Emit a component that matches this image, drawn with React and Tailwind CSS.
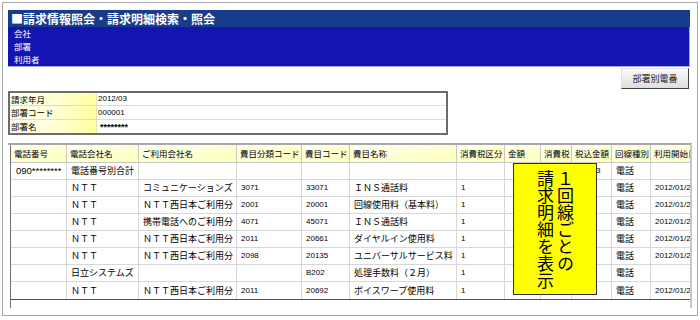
import React from "react";

const W = [56, 72, 98, 65, 48, 107, 48, 36, 31, 40, 39, 60];
const HEAD = ["電話番号", "電話会社名", "ご利用会社名", "費目分類コード", "費目コード", "費目名称", "消費税区分", "金額", "消費税", "税込金額", "回線種別", "利用開始日"];
const NUMCOL = [false, false, false, true, true, false, true, true, true, true, false, true];

const ROWS = [
  ["090********", "電話番号別合計", "", "", "", "", "", "9,803", "780", "10,583", "電話", ""],
  ["", "ＮＴＴ", "コミュニケーションズ", "3071", "33071", "ＩＮＳ通話料", "1", "420", "33", "453", "電話", "2012/01/21"],
  ["", "ＮＴＴ", "ＮＴＴ西日本ご利用分", "2001", "20001", "回線使用料（基本料）", "1", "4,740", "379", "5,119", "電話", "2012/01/21"],
  ["", "ＮＴＴ", "携帯電話へのご利用分", "4071", "45071", "ＩＮＳ通話料", "1", "1,201", "96", "1,297", "電話", "2012/01/21"],
  ["", "ＮＴＴ", "ＮＴＴ西日本ご利用分", "2011", "20661", "ダイヤルイン使用料", "1", "800", "64", "864", "電話", "2012/01/21"],
  ["", "ＮＴＴ", "ＮＴＴ西日本ご利用分", "2098", "20135", "ユニバーサルサービス料", "1", "8", "0", "8", "電話", "2012/01/21"],
  ["", "日立システムズ", "", "", "B202", "処理手数料（２月）", "1", "300", "24", "324", "電話", ""],
  ["", "ＮＴＴ", "ＮＴＴ西日本ご利用分", "2011", "20692", "ボイスワープ使用料", "1", "1,530", "122", "1,652", "電話", "2012/01/21"],
];

function cellFont(ci) {
  if (ci === 0) return "font-['Liberation_Sans',sans-serif] text-[9.5px] pl-[5px]";
  if (ci === 7 || ci === 8) return "font-['Liberation_Sans',sans-serif] text-[8px] justify-end pr-[5px]";
  if (NUMCOL[ci]) return "font-['Liberation_Sans',sans-serif] text-[8px] pl-[4px]";
  return "text-[9px] pl-[4px]";
}

export default function App() {
  return (
    <div className="w-[700px] h-[320px] bg-white relative overflow-hidden font-['Noto_Sans_CJK_JP',sans-serif] text-black">
      <div className="ml-[2px] mt-[2px] w-[696px] h-[314px] border border-[#a8a8a8] pl-[5px] pt-[7px]">
        <div className="w-[682px]">
          {/* header block */}
          <div className="h-[17px] bg-[#173d8a] text-white font-bold text-[12px] leading-[17px] pl-[3px] whitespace-nowrap">
            ■請求情報照会・請求明細検索・照会
          </div>
          <div className="h-[40px] bg-[#1414b0] text-white text-[8.5px] leading-[13px] pl-[6px] border-b border-r border-[#a8a8e0]">
            <div>会社</div>
            <div>部署</div>
            <div>利用者</div>
          </div>

          {/* button */}
          <div className="flex justify-end mt-[1px]">
            <div className="mr-[1px] w-[68px] h-[21px] flex items-center justify-center text-[9px] text-[#202020] bg-linear-to-b from-[#fbfbfb] to-[#dedede] border border-t-[#e0e0e0] border-l-[#e0e0e0] border-r-[#404040] border-b-[#404040]">
              部署別電番
            </div>
          </div>

          {/* info table */}
          <div className="mt-[2px] w-[440px] h-[44px] border-2 border-[#6c6c6c] text-[8.5px]">
            {[
              ["請求年月", "2012/03", "h-[13px]"],
              ["部署コード", "000001", "h-[14px]"],
              ["部署名", "********", "h-[13px]"],
            ].map(([l, v, h], i) => (
              <div key={i} className={`flex ${h} ${i < 2 ? "border-b border-[#dcdcdc]" : ""}`}>
                <div className="w-[87px] h-full pl-[1px] flex items-center bg-linear-to-r from-[#ffffec] via-[#ffffd8] to-[#ffff9c] border-r border-[#e4e4b0]">
                  {l}
                </div>
                <div
                  className={`flex-1 h-full flex items-center font-['Liberation_Sans',sans-serif] ${
                    i === 2 ? "pl-[3px] text-[9px] font-bold pt-[2px]" : "pl-[1px] text-[8px]"
                  }`}
                >
                  {v}
                </div>
              </div>
            ))}
          </div>

          {/* main table */}
          <div className="mt-[8px] w-[684px] border-t-2 border-r-2 border-t-[#a8a8a8] border-r-[#c8c8c8] pl-[2px]">
            <div className="h-[163px] border-l border-[#707070] overflow-hidden">
              <div className="w-[700px] border-b border-[#505050]">
                <div className="flex h-[18px] border-b border-[#c8c8c8]">
                  {HEAD.map((h, i) => (
                    <div
                      key={i}
                      style={{ width: W[i] }}
                      className="shrink-0 h-full flex items-center pl-[3px] text-[8.5px] whitespace-nowrap overflow-hidden bg-linear-to-br from-[#fffff4] to-[#ffffb4] border-r border-[#c8c8c8]"
                    >
                      {h}
                    </div>
                  ))}
                </div>
                {ROWS.map((r, ri) => (
                  <div key={ri} className={`flex h-[17px] ${ri < ROWS.length - 1 ? "border-b border-[#d8d8d8]" : ""}`}>
                    {r.map((c, ci) => (
                      <div
                        key={ci}
                        style={{ width: W[ci] }}
                        className={`shrink-0 h-full flex items-center whitespace-nowrap overflow-hidden border-r border-[#d8d8d8] ${cellFont(ci)}`}
                      >
                        {c}
                      </div>
                    ))}
                  </div>
                ))}
              </div>
            </div>
          </div>
        </div>
      </div>

      {/* callout */}
      <div className="absolute left-[513px] top-[163px] w-[84px] h-[132px] bg-[#ffff00] border border-[#333333] flex justify-center pt-[6px]">
        <div className="[writing-mode:vertical-rl] h-[124px] text-[17px] leading-[20px] text-black">
          １回線ごとの
          <br />
          請求明細を表示
        </div>
      </div>
    </div>
  );
}
